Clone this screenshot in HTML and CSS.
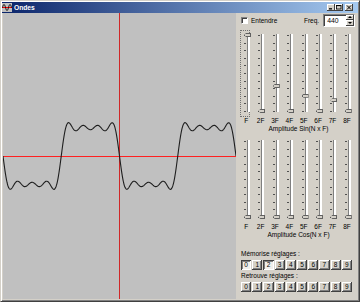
FILE: index.html
```html
<!DOCTYPE html>
<html lang="fr">

<head>
    <meta charset="UTF-8">
    <title>Ondes</title>
    <link rel="stylesheet" href="styles.css">
</head>

<body>
    <div class="window">
        <div class="titlebar">
            <svg class="app-icon" width="10" height="9" viewBox="0 0 10 9">
                <rect width="10" height="9" fill="#c0c0c0" />
                <path d="M0 4.5H10" stroke="#e00" stroke-width="1" />
                <path d="M0.5 4.5C1.5 0.5 2.5 0.5 3.5 4.5S5.5 8.5 6.5 4.5S8.5 0.5 9.5 4.5" fill="none" stroke="#000" stroke-width="0.9" />
            </svg>
            <span class="title">Ondes</span>
            <div class="caption-btns">
                <span class="cbtn"><svg width="8" height="7" viewBox="0 0 8 7"><rect x="2" y="4.2" width="3" height="1.3" fill="#000" /></svg></span>
                <span class="cbtn"><svg width="8" height="7" viewBox="0 0 8 7"><rect x="1.5" y="1.5" width="4.5" height="3.5" fill="none" stroke="#000" stroke-width="0.8" /><rect x="1.5" y="1.2" width="4.5" height="0.9" fill="#000" /></svg></span>
                <span class="cbtn close"><svg width="8" height="7" viewBox="0 0 8 7"><path d="M2 1.5L6 5.5M6 1.5L2 5.5" stroke="#000" stroke-width="1" /></svg></span>
            </div>
        </div>

        <div class="client">
            <div class="scope">
                <svg width="233" height="286" viewBox="0 0 233 286">
                    <line x1="0" y1="143.5" x2="233" y2="143.5" stroke="#ff2020" stroke-width="1" />
                    <line x1="116.5" y1="0" x2="116.5" y2="286" stroke="#d02828" stroke-width="1" />
                    <polyline id="wave" fill="none" stroke="#1e1e1e" stroke-width="1.1" points="" />
                </svg>
            </div>

            <div class="panel">
                <div class="top-row">
                    <label class="check"><span class="box"></span>Entendre</label>
                    <span class="freq-label">Freq.</span>
                    <div class="spin-edit">
                        <span class="value">440</span>
                        <span class="spin"><i class="up"></i><i class="down"></i></span>
                    </div>
                </div>

                <!-- amplitudes sinus -->
                <div class="sliders" id="sin">
                    <div class="slider" style="--v: 1"><span class="focus"></span><b class="thumb"></b></div>
                    <div class="slider" style="--v: 0"><b class="thumb"></b></div>
                    <div class="slider" style="--v: .33"><b class="thumb"></b></div>
                    <div class="slider" style="--v: 0"><b class="thumb"></b></div>
                    <div class="slider" style="--v: .2"><b class="thumb"></b></div>
                    <div class="slider" style="--v: 0"><b class="thumb"></b></div>
                    <div class="slider" style="--v: .14"><b class="thumb"></b></div>
                    <div class="slider" style="--v: 0"><b class="thumb"></b></div>
                </div>
                <div class="scale-labels">
                    <span>F</span><span>2F</span><span>3F</span><span>4F</span>
                    <span>5F</span><span>6F</span><span>7F</span><span>8F</span>
                </div>
                <div class="group-title">Amplitude Sin(N x F)</div>

                <!-- amplitudes cosinus -->
                <div class="sliders cos" id="cos">
                    <div class="slider" style="--v: 0"><b class="thumb"></b></div>
                    <div class="slider" style="--v: 0"><b class="thumb"></b></div>
                    <div class="slider" style="--v: 0"><b class="thumb"></b></div>
                    <div class="slider" style="--v: 0"><b class="thumb"></b></div>
                    <div class="slider" style="--v: 0"><b class="thumb"></b></div>
                    <div class="slider" style="--v: 0"><b class="thumb"></b></div>
                    <div class="slider" style="--v: 0"><b class="thumb"></b></div>
                    <div class="slider" style="--v: 0"><b class="thumb"></b></div>
                </div>
                <div class="scale-labels">
                    <span>F</span><span>2F</span><span>3F</span><span>4F</span>
                    <span>5F</span><span>6F</span><span>7F</span><span>8F</span>
                </div>
                <div class="group-title">Amplitude Cos(N x F)</div>

                <div class="memo-title">Mémorise réglages :</div>
                <div class="buttons">
                    <span class="btn down">0</span><span class="btn">1</span><span class="btn down">2</span>
                    <span class="btn">3</span><span class="btn">4</span><span class="btn">5</span>
                    <span class="btn">6</span><span class="btn">7</span><span class="btn">8</span>
                    <span class="btn">9</span>
                </div>
                <div class="memo-title second">Retrouve réglages :</div>
                <div class="buttons">
                    <span class="btn">0</span><span class="btn">1</span><span class="btn">2</span>
                    <span class="btn">3</span><span class="btn">4</span><span class="btn">5</span>
                    <span class="btn">6</span><span class="btn">7</span><span class="btn">8</span>
                    <span class="btn">9</span>
                </div>
            </div>
        </div>
    </div>

    <script type="text/javascript">
    window.onload = function() {
        // lire les valeurs des curseurs
        function values(id) {
            var list = document.getElementById(id).children;
            var v = [];
            for (var i = 0; i < list.length; i++) {
                v.push(parseFloat(list[i].style.getPropertyValue('--v')) || 0);
            }
            return v;
        }
        var s = values('sin');
        var c = values('cos');

        // tracer la somme des harmoniques
        var w = 2 * Math.PI / 116.5;
        var pts = [];
        for (var x = 0; x <= 233; x += 0.5) {
            var y = 0;
            for (var k = 0; k < 8; k++) {
                y += s[k] * Math.sin((k + 1) * w * x) + c[k] * Math.cos((k + 1) * w * x);
            }
            pts.push(x + ',' + (143 + 36 * y).toFixed(2));
        }
        document.getElementById('wave').setAttribute('points', pts.join(' '));
    };
    </script>
</body>

</html>
```

FILE: styles.css
```css
* {
    margin: 0;
    padding: 0;
    box-sizing: border-box;
}

body {
    font-family: "Liberation Sans", Arial, sans-serif;
    font-size: 6.5px;
    color: #000;
}

.window {
    width: 360px;
    height: 302px;
    background: #d4d0c8;
    border: 1px solid;
    border-color: #d4d0c8 #404040 #404040 #d4d0c8;
    box-shadow: inset 1px 1px #fff, inset -1px -1px #808080;
    padding: 1px;
    display: flex;
    flex-direction: column;
}

/* barre de titre */
.titlebar {
    height: 11px;
    display: flex;
    align-items: center;
    background: linear-gradient(to right, #0a246a, #a6caf0);
}

.app-icon {
    display: block;
    margin-right: 2px;
}

.title {
    color: #fff;
    font-weight: bold;
    font-size: 6.7px;
    line-height: 11px;
}

.caption-btns {
    margin-left: auto;
    margin-right: 5px;
    display: flex;
}

.cbtn {
    width: 8px;
    height: 7px;
    background: #d4d0c8;
    box-shadow: inset -1px -1px #404040, inset 1px 1px #fff;
}

.cbtn svg {
    display: block;
}

.cbtn.close {
    margin-left: 2px;
}

/* zone client */
.client {
    flex: 1;
    display: flex;
}

.scope {
    width: 233px;
    height: 286px;
    margin-left: 1px;
    background: #c0c0c0;
}

.scope svg {
    display: block;
}

.panel {
    flex: 1;
    padding: 0 5px;
    display: flex;
    flex-direction: column;
}

.top-row {
    height: 14px;
    display: flex;
    align-items: center;
}

.check {
    display: flex;
    align-items: center;
    gap: 3px;
}

.check .box {
    width: 7px;
    height: 7px;
    background: #fff;
    border: 1px solid;
    border-color: #808080 #fff #fff #808080;
    box-shadow: inset 1px 1px #404040;
}

.freq-label {
    margin-left: auto;
    margin-right: 4px;
}

.spin-edit {
    width: 32px;
    height: 13px;
    margin-right: 1px;
    background: #fff;
    border: 1px solid;
    border-color: #808080 #fff #fff #808080;
    box-shadow: inset 1px 1px #404040;
    display: flex;
    align-items: center;
}

.spin-edit .value {
    flex: 1;
    padding-left: 3px;
    font-size: 6.8px;
}

.spin {
    width: 8px;
    height: 11px;
    display: flex;
    flex-direction: column;
}

.spin i {
    flex: 1;
    position: relative;
    background: #d4d0c8;
    box-shadow: inset -1px -1px #404040, inset 1px 1px #fff;
}

.spin i::after {
    content: '';
    position: absolute;
    left: 2px;
    top: 1.5px;
    border-left: 2px solid transparent;
    border-right: 2px solid transparent;
}

.spin .up::after {
    border-bottom: 2px solid #000;
}

.spin .down::after {
    border-top: 2px solid #000;
}

/* curseurs */
.sliders {
    display: grid;
    grid-template-columns: repeat(8, 14.4px);
    height: 87px;
    margin-top: 3px;
}

.slider {
    position: relative;
}

.slider::before {
    content: '';
    position: absolute;
    left: 3px;
    top: 5px;
    width: 2px;
    height: 77px;
    background: repeating-linear-gradient(to bottom, #505050 0 1px, transparent 1px 7.6px);
}

.slider::after {
    content: '';
    position: absolute;
    left: 6px;
    top: 4px;
    width: 2px;
    height: 78px;
    border-left: 1px solid #808080;
    background: #fff;
}

.thumb {
    position: absolute;
    z-index: 1;
    left: 3px;
    top: calc(5px + (1 - var(--v)) * 76px - 2px);
    width: 7px;
    height: 4px;
    background: #606060;
    clip-path: polygon(0 50%, 2px 0, 100% 0, 100% 100%, 2px 100%);
}

.thumb::after {
    content: '';
    position: absolute;
    left: 1px;
    top: 1px;
    right: 1px;
    bottom: 1px;
    background: #d4d0c8;
}

.focus {
    position: absolute;
    left: -1px;
    top: 0;
    width: 10px;
    height: 87px;
    border: 1px dotted #707070;
}

.scale-labels {
    display: grid;
    grid-template-columns: repeat(8, 14.4px);
    height: 8px;
    line-height: 8px;
}

.scale-labels span {
    text-align: center;
    padding-right: 4px;
}

.group-title {
    width: 115px;
    height: 8px;
    line-height: 8px;
    text-align: center;
}

/* mémoires */
.memo-title {
    height: 8px;
    line-height: 8px;
    margin-top: 11px;
}

.memo-title.second {
    margin-top: 2px;
}

.buttons {
    display: grid;
    grid-template-columns: repeat(10, 10.2px);
    gap: 1px;
    height: 10px;
    margin-top: 2px;
}

.btn {
    height: 10px;
    line-height: 10px;
    text-align: center;
    background: #d4d0c8;
    box-shadow: inset -1px -1px #404040, inset 1px 1px #fff, inset -2px -2px #808080;
}

.btn.down {
    background: #f0efeb;
    box-shadow: inset 1px 1px #404040, inset -1px -1px #fff, inset 2px 2px #808080;
}
```
